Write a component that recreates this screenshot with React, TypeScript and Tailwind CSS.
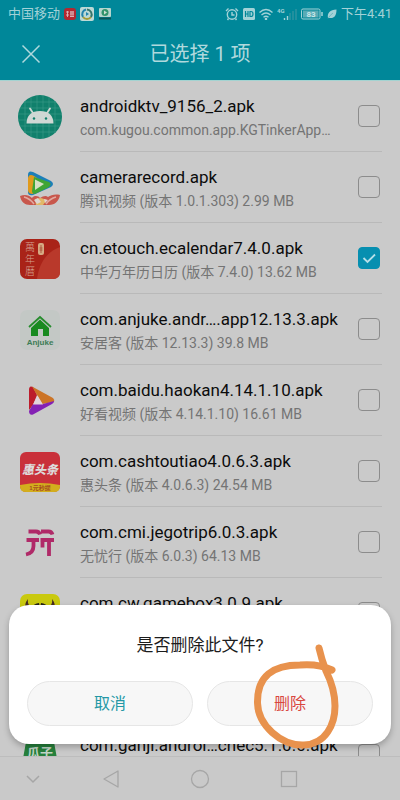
import { useState } from "react";
import type { ReactNode } from "react";

type ApkFile = {
  id: string;
  name: string;
  detail: string;
  icon: ReactNode;
};

function AndroidIcon() {
  return (
    <svg viewBox="0 0 44 44" className="size-11" aria-hidden="true">
      <circle cx="22" cy="22" r="22" fill="#11806c" />
      <path
        d="M7 6v32M13 2v40M19 0v44M25 0v44M31 2v40M37 6v32M6 7h32M2 13h40M0 19h44M0 25h44M2 31h40M6 37h32"
        stroke="#3c9a89"
        strokeWidth="0.6"
      />
      <path d="M12 13.500l4 6M32 13.500l-4 6" stroke="#d0d8d4" strokeWidth="1.800" strokeLinecap="round" />
      <path d="M8.500 28.500c0-8 5-12.500 13.500-12.500s13.500 4.500 13.500 12.500z" fill="#d0d8d4" />
      <circle cx="16" cy="23.500" r="1.200" fill="#11806c" />
      <circle cx="28" cy="23.500" r="1.200" fill="#11806c" />
    </svg>
  );
}

function TencentVideoIcon() {
  return (
    <svg viewBox="0 0 40 40" className="size-10" aria-hidden="true">
      <path d="M8 7q0-5 5-3l18 9q4 3 0 6L13 27q-5 1-5-3z" fill="#1c7fb8" />
      <path d="M8 10q1-5 6-2l6 4-7 14q-5 0-5-4z" fill="#e09a1c" />
      <path d="M14 9l15 5q3 2 0 5L15 26q-3 0-3-3z" fill="#3fa535" />
      <path d="M15 11.500l9 4.500-9 6z" fill="#d7e0c4" />
      <path d="M0 28c5-2 9-1 12 2 2-3 7-2 8 0 3-2 6-3 8-1 3-2 7-3 12-2-1 6-5 10-11 10H10C5 37 1 34 0 28z" fill="#c8574c" />
      <path d="M4 29c4 1 7 3 10 7M36 29c-4 1-7 3-10 7" stroke="#e2aaa0" strokeWidth="1.500" fill="none" />
      <path d="M15 31l6-1 6 2-4 5h-7z" fill="#e1b868" />
      <path d="M14 32l4-2 3 4-4 2zM24 31l4 1-3 3z" fill="#ded5d2" />
    </svg>
  );
}

function CalendarIcon() {
  return (
    <svg viewBox="0 0 40 40" className="size-10" aria-hidden="true">
      <rect width="40" height="40" rx="7" fill="#a92318" />
      <path d="M40 8v25q0 7-7 7H17c2-15 9-27 23-32z" fill="#b9392b" />
      <g fill="#d5a293" fontSize="10" fontWeight="300" fontFamily="'Liberation Sans', 'Noto Sans CJK SC', sans-serif">
        <text x="5" y="12">萬</text>
        <text x="5" y="24">年</text>
        <text x="5" y="36">曆</text>
      </g>
      <rect x="18" y="4" width="6" height="12" rx="2" fill="#d6aa83" />
      <path d="M21 6v8M19.500 9h3M19.500 11h3" stroke="#a64a32" strokeWidth="0.800" />
    </svg>
  );
}

function AnjukeIcon() {
  return (
    <svg viewBox="0 0 40 40" className="size-10" aria-hidden="true">
      <rect width="40" height="40" rx="7" fill="#c3c8c5" />
      <path d="M9 17L20 7l11 10" fill="none" stroke="#258c2c" strokeWidth="1.800" />
      <path d="M11 18l9-8.500 9 8.500v8h-6v-7h-5v7h-7z" fill="#198a20" />
      <text x="20" y="35" textAnchor="middle" fontSize="8" fontWeight="700" fontFamily="'Liberation Sans', sans-serif" fill="#3c7c55">
        Anjuke
      </text>
    </svg>
  );
}

function HaokanIcon() {
  return (
    <svg viewBox="0 0 40 40" className="size-10" aria-hidden="true">
      <path d="M9 9q0-5 4-3l4 8-4 10-4 5z" fill="#bc1c2b" />
      <path d="M12 5.500L33 17q2 2 1 4l-12 2-5-9z" fill="#cc7427" />
      <path d="M9 30l4-7 10 0 11-3q0 2-2 3L13 33.500q-4 1-4-3.500z" fill="#8421b4" />
      <path d="M17.500 14.500l5.500 9H13z" fill="#e1d3da" />
    </svg>
  );
}

function HuitoutiaoIcon() {
  return (
    <svg viewBox="0 0 40 40" className="size-10" aria-hidden="true">
      <rect width="40" height="40" rx="6" fill="#c9303a" />
      <path d="M0 33q20-4 40 0v1q0 6-6 6H6q-6 0-6-6z" fill="#d3ae1d" />
      <text x="20" y="22" textAnchor="middle" fontSize="12" fontWeight="900" fontStyle="italic" fontFamily="'Noto Sans CJK SC', sans-serif" fill="#dddada">
        惠头条
      </text>
      <text x="20" y="38" textAnchor="middle" fontSize="6" fontWeight="700" fontFamily="'Liberation Sans', 'Noto Sans CJK SC', sans-serif" fill="#a54b20">
        1元秒提
      </text>
    </svg>
  );
}

function JegotripIcon() {
  return (
    <svg viewBox="0 0 40 40" className="size-10" aria-hidden="true">
      <g fill="none" stroke="#b02a68" strokeWidth="3.800">
        <path d="M8.500 8.500H16q3 0 4 3M21 8.500h7.500q3 0 4 3" />
        <path d="M6.500 17H19M13.500 17v6q0 7-7.500 8.500" />
        <path d="M20.500 17H34M22.500 17v7.500M29 17v16" />
      </g>
    </svg>
  );
}

function GameboxIcon() {
  return (
    <svg viewBox="0 0 40 40" className="size-10" aria-hidden="true">
      <rect width="40" height="40" rx="7" fill="#c9c90f" />
      <path d="M8 5c-5 6-3 12 4 14l3-5c-5 0-8-4-7-9zM32 5c5 6 3 12-4 14l-3-5c5 0 8-4 7-9z" fill="#472c22" />
      <path d="M11 15q3-6 8-6v6l1-6 1 6V9q5 0 8 6l-2 14-7 5-7-5z" fill="#252219" />
    </svg>
  );
}

function GuaziIcon() {
  return (
    <svg viewBox="0 0 40 40" className="size-10" aria-hidden="true">
      <path d="M10 3h20q3 0 4 3l4 22q0 8-8 8H10q-8 0-8-8L6 6q1-3 4-3z" fill="#26803c" />
      <text x="20" y="21" textAnchor="middle" fontSize="13" fontWeight="700" fontFamily="'Liberation Sans', 'Noto Sans CJK SC', sans-serif" fill="#c3d5c7">
        瓜子
      </text>
    </svg>
  );
}

const files: ApkFile[] = [
  { id: "ktv", name: "androidktv_9156_2.apk", detail: "com.kugou.common.app.KGTinkerApp…", icon: <AndroidIcon /> },
  { id: "camera", name: "camerarecord.apk", detail: "腾讯视频 (版本 1.0.1.303) 2.99 MB", icon: <TencentVideoIcon /> },
  { id: "calendar", name: "cn.etouch.ecalendar7.4.0.apk", detail: "中华万年历日历 (版本 7.4.0) 13.62 MB", icon: <CalendarIcon /> },
  { id: "anjuke", name: "com.anjuke.andr….app12.13.3.apk", detail: "安居客 (版本 12.13.3) 39.8 MB", icon: <AnjukeIcon /> },
  { id: "haokan", name: "com.baidu.haokan4.14.1.10.apk", detail: "好看视频 (版本 4.14.1.10) 16.61 MB", icon: <HaokanIcon /> },
  { id: "toutiao", name: "com.cashtoutiao4.0.6.3.apk", detail: "惠头条 (版本 4.0.6.3) 24.54 MB", icon: <HuitoutiaoIcon /> },
  { id: "jego", name: "com.cmi.jegotrip6.0.3.apk", detail: "无忧行 (版本 6.0.3) 64.13 MB", icon: <JegotripIcon /> },
  { id: "gamebox", name: "com.cw.gamebox3.0.9.apk", detail: "", icon: <GameboxIcon /> },
  { id: "blank", name: "", detail: "", icon: null },
  { id: "ganji", name: "com.ganji.androi…chec5.1.0.0.apk", detail: "", icon: <GuaziIcon /> },
];

function StatusBar() {
  return (
    <div className="flex h-7 items-center justify-between px-2 text-[#a3d2d7]">
      <div className="flex items-center gap-1">
        <span className="text-[13px]">中国移动</span>
        <svg viewBox="0 0 12 12" className="size-3" aria-hidden="true">
          <rect width="12" height="12" rx="3" fill="#b32830" />
          <path d="M2 4h3M3.500 3v6M2 7h3M6 4h4M6 6h4M7 3v6M9 3v6M6 8.500h4" stroke="#dcb9bb" strokeWidth="0.900" />
        </svg>
        <svg viewBox="0 0 14 14" className="size-3.5" aria-hidden="true">
          <rect width="14" height="14" rx="2" fill="#bcd9d6" />
          <path d="M6 2.500a5 5 0 0 0-3 7.500" fill="none" stroke="#2383ad" strokeWidth="2" />
          <path d="M3 10a5 5 0 0 0 8 0" fill="none" stroke="#a79b35" strokeWidth="2" />
          <path d="M7 2.500a5 5 0 0 1 4 7.500" fill="none" stroke="#34766c" strokeWidth="2" />
          <path d="M6 5l3 2-3 2z" fill="#2383ad" />
        </svg>
        <svg viewBox="0 0 14 14" className="size-3.5" aria-hidden="true">
          <rect x="1" y="1" width="12" height="9" rx="1" fill="#b5d5ce" />
          <circle cx="7" cy="5.500" r="3.500" fill="#31936c" />
          <path d="M6 3.500l3 2-3 2z" fill="#d0dfd2" />
          <path d="M1 11.500h12" stroke="#0b5457" strokeWidth="2" />
        </svg>
      </div>
      <div className="flex items-center gap-1">
        <svg viewBox="0 0 14 14" className="size-3.5" fill="none" stroke="currentColor" strokeWidth="1.400" aria-hidden="true">
          <circle cx="7" cy="7.500" r="4.700" />
          <path d="M7 5v3h2.500M1 4l2.500-2.500M13 4l-2.500-2.500M3.500 11.500L2.500 13M10.500 11.500l1 1.500" />
        </svg>
        <svg viewBox="0 0 12 12" className="size-3" aria-hidden="true">
          <rect width="12" height="12" rx="1.500" fill="currentColor" />
          <path d="M2.500 3v6M5 3v6M2.500 6H5M7 3.500v5h1q2 0 2-2.500T8 3.500z" fill="none" stroke="#008799" strokeWidth="1.200" />
        </svg>
        <svg viewBox="0 0 14 12" className="h-3 w-3.5" fill="none" stroke="currentColor" strokeWidth="1.400" aria-hidden="true">
          <path d="M0.500 4.500q6.500-6 13 0M2.500 7q4.500-4 9 0M4.500 9.200q2.500-2 5 0" />
          <circle cx="7" cy="11" r="0.600" fill="currentColor" />
        </svg>
        <svg viewBox="0 0 20 14" className="h-3.5 w-5" aria-hidden="true">
          <text x="0" y="6" fontSize="6" fontWeight="700" fontFamily="Roboto, sans-serif" fill="currentColor">4G</text>
          <path d="M7.500 11v2M10.500 9v4" stroke="currentColor" strokeWidth="1.400" />
          <path d="M13 6v7M16 4v9M19 2v11" stroke="#2f94a1" strokeWidth="1.400" />
        </svg>
        <svg viewBox="0 0 22 12" className="h-3 w-[22px]" aria-hidden="true">
          <rect x="0.500" y="1" width="18.500" height="10" rx="1.500" fill="none" stroke="currentColor" />
          <rect x="2" y="2.500" width="15.500" height="7" fill="#5aabb5" />
          <path d="M21 4v4" stroke="currentColor" strokeWidth="1.500" />
          <text x="10" y="9" textAnchor="middle" fontSize="8" fontWeight="700" fontFamily="Roboto, sans-serif" fill="#c8e6e9">83</text>
        </svg>
        <svg viewBox="0 0 10 10" className="size-2.5" aria-hidden="true">
          <path d="M1 9C0 4 3 1 9.500 0.500c0 7-3 9-6.500 8.500z" fill="currentColor" />
          <path d="M1 9.500Q3 6 6 4" fill="none" stroke="#4ea5af" strokeWidth="0.600" />
        </svg>
        <span className="text-[13px]">下午4:41</span>
      </div>
    </div>
  );
}

function FileRow({ file, checked, onToggle }: { file: ApkFile; checked: boolean; onToggle: () => void }) {
  return (
    <li className="flex h-[71px] shrink-0 items-center pr-[18px]">
      <div className="flex w-20 shrink-0 justify-center">{file.icon}</div>
      <div className="flex h-full min-w-0 flex-1 items-center justify-between border-b border-[#b9b9b9]">
        <label htmlFor={file.id} className="min-w-0 flex-1 pt-[3px]">
          <span className="block h-6 truncate text-[17px] leading-6 text-[#0c0c0c]">{file.name}</span>
          <span className="block h-6 truncate text-[14px] leading-6 text-[#747474]">{file.detail}</span>
        </label>
        <span className="relative mr-[2px] flex size-[22px] shrink-0">
          <input
            id={file.id}
            type="checkbox"
            checked={checked}
            onChange={onToggle}
            className="size-[22px] appearance-none rounded border border-[#8c8c8c] checked:border-[#078fb0] checked:bg-[#078fb0]"
          />
          {checked && (
            <svg viewBox="0 0 22 22" className="pointer-events-none absolute inset-0" aria-hidden="true">
              <path d="M5.500 11l4 4 7.500-7.500" fill="none" stroke="#b5dfe8" strokeWidth="1.800" />
            </svg>
          )}
        </span>
      </div>
    </li>
  );
}

export default function App() {
  const [selected, setSelected] = useState<string[]>(["calendar"]);
  const [open, setOpen] = useState(true);

  const toggle = (id: string) => {
    setSelected((prev) => (prev.includes(id) ? prev.filter((x) => x !== id) : [...prev, id]));
  };

  return (
    <div className="relative flex h-screen flex-col overflow-hidden bg-[#cacaca] font-[Roboto,'Noto_Sans_CJK_SC',sans-serif]">
      <header className="shrink-0 border-b border-[#a3d3d1] bg-[#008799]">
        <StatusBar />
        <div className="grid h-[52px] grid-cols-[62px_1fr_62px] items-center text-[#b0d9dd]">
          <button type="button" aria-label="关闭" className="flex justify-center">
            <svg viewBox="0 0 20 20" className="size-5" aria-hidden="true">
              <path d="M1.500 1.500l17 17M18.500 1.500l-17 17" stroke="currentColor" strokeWidth="1.500" />
            </svg>
          </button>
          <h1 className="text-center text-[20px]">已选择 {selected.length} 项</h1>
        </div>
      </header>

      <ul className="flex min-h-0 flex-1 flex-col overflow-hidden">
        {files.map((file) => (
          <FileRow key={file.id} file={file} checked={selected.includes(file.id)} onToggle={() => toggle(file.id)} />
        ))}
      </ul>

      <nav className="flex h-11 shrink-0 items-center border-t border-[#bdbdbd] bg-[#c9c9c9] pr-[66px] text-[#a6a6a6]">
        <button type="button" aria-label="收起" className="flex w-[66px] justify-center">
          <svg viewBox="0 0 16 16" className="size-4" fill="none" stroke="currentColor" strokeWidth="1.500" aria-hidden="true">
            <path d="M2 5l6 6 6-6" />
          </svg>
        </button>
        <div className="flex flex-1 justify-around">
          <button type="button" aria-label="返回">
            <svg viewBox="0 0 20 20" className="size-5" fill="none" stroke="currentColor" strokeWidth="1.300" aria-hidden="true">
              <path d="M17 2v16L3 10z" strokeLinejoin="round" />
            </svg>
          </button>
          <button type="button" aria-label="主页">
            <svg viewBox="0 0 20 20" className="size-5" fill="none" stroke="currentColor" strokeWidth="1.300" aria-hidden="true">
              <circle cx="10" cy="10" r="8.500" />
            </svg>
          </button>
          <button type="button" aria-label="最近">
            <svg viewBox="0 0 20 20" className="size-5" fill="none" stroke="currentColor" strokeWidth="1.300" aria-hidden="true">
              <rect x="2.500" y="2.500" width="15" height="15" />
            </svg>
          </button>
        </div>
      </nav>

      {open && (
        <div role="dialog" aria-labelledby="dialog-title" className="absolute inset-x-[9px] bottom-14 rounded-[20px] bg-white px-[18px] pb-[18px] pt-7 shadow-[0_3px_6px_rgba(0,0,0,0.25)]">
          <h2 id="dialog-title" className="mb-6 text-center text-[17px] leading-6 text-[#1c1c1c]">
            是否删除此文件?
          </h2>
          <div className="grid grid-cols-2 gap-[14px] text-[16px]">
            <button type="button" onClick={() => setOpen(false)} className="h-[45px] rounded-full border border-[#e6e6e6] bg-[#f7f7f7] text-[#2498a6]">
              取消
            </button>
            <button type="button" onClick={() => setOpen(false)} className="h-[45px] rounded-full border border-[#e6e6e6] bg-[#f7f7f7] text-[#d9473f]">
              删除
            </button>
          </div>
          <svg viewBox="0 0 90 112" className="pointer-events-none absolute -bottom-2 right-[51px] h-28 w-[90px]" aria-hidden="true">
            <path
              d="M69 8c2 9 4 15 7 23 5 10 9 22 9 35 0 18-9 38-31 39C31 106 8 85 7.500 63 7 36 23 25 50 25c13-1 24 1 32 5"
              fill="none"
              stroke="#e8924d"
              strokeWidth="7"
              strokeLinecap="round"
              strokeLinejoin="round"
            />
          </svg>
        </div>
      )}
    </div>
  );
}
